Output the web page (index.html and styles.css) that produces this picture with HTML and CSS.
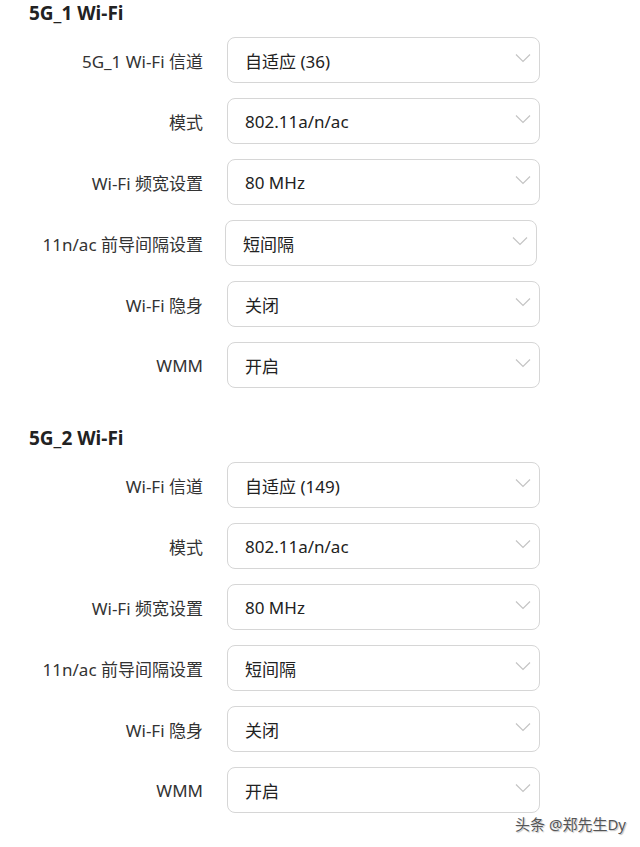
FILE: index.html
```
<!DOCTYPE html>
<html lang="zh-CN">
<head>
    <meta charset="UTF-8">
    <meta name="viewport" content="width=device-width, initial-scale=1.0">
    <title>5G Wi-Fi 设置</title>
    <link rel="stylesheet" href="styles.css">
</head>
<body>
    <div class="page">
        <div class="section">
            <h2 class="section-title">5G_1 Wi-Fi</h2>
            <div class="form">
                <div class="row">
                    <label>5G_1 Wi-Fi 信道</label>
                    <div class="select"><span>自适应 (36)</span><svg class="arrow" viewBox="0 0 16 10"><path d="M1 1.5 L8 8.5 L15 1.5"/></svg></div>
                </div>
                <div class="row">
                    <label>模式</label>
                    <div class="select"><span>802.11a/n/ac</span><svg class="arrow" viewBox="0 0 16 10"><path d="M1 1.5 L8 8.5 L15 1.5"/></svg></div>
                </div>
                <div class="row">
                    <label>Wi-Fi 频宽设置</label>
                    <div class="select"><span>80 MHz</span><svg class="arrow" viewBox="0 0 16 10"><path d="M1 1.5 L8 8.5 L15 1.5"/></svg></div>
                </div>
                <div class="row">
                    <label>11n/ac 前导间隔设置</label>
                    <div class="select shifted"><span>短间隔</span><svg class="arrow" viewBox="0 0 16 10"><path d="M1 1.5 L8 8.5 L15 1.5"/></svg></div>
                </div>
                <div class="row">
                    <label>Wi-Fi 隐身</label>
                    <div class="select"><span>关闭</span><svg class="arrow" viewBox="0 0 16 10"><path d="M1 1.5 L8 8.5 L15 1.5"/></svg></div>
                </div>
                <div class="row">
                    <label>WMM</label>
                    <div class="select"><span>开启</span><svg class="arrow" viewBox="0 0 16 10"><path d="M1 1.5 L8 8.5 L15 1.5"/></svg></div>
                </div>
            </div>
        </div>

        <div class="section">
            <h2 class="section-title">5G_2 Wi-Fi</h2>
            <div class="form">
                <div class="row">
                    <label>Wi-Fi 信道</label>
                    <div class="select"><span>自适应 (149)</span><svg class="arrow" viewBox="0 0 16 10"><path d="M1 1.5 L8 8.5 L15 1.5"/></svg></div>
                </div>
                <div class="row">
                    <label>模式</label>
                    <div class="select"><span>802.11a/n/ac</span><svg class="arrow" viewBox="0 0 16 10"><path d="M1 1.5 L8 8.5 L15 1.5"/></svg></div>
                </div>
                <div class="row">
                    <label>Wi-Fi 频宽设置</label>
                    <div class="select"><span>80 MHz</span><svg class="arrow" viewBox="0 0 16 10"><path d="M1 1.5 L8 8.5 L15 1.5"/></svg></div>
                </div>
                <div class="row">
                    <label>11n/ac 前导间隔设置</label>
                    <div class="select"><span>短间隔</span><svg class="arrow" viewBox="0 0 16 10"><path d="M1 1.5 L8 8.5 L15 1.5"/></svg></div>
                </div>
                <div class="row">
                    <label>Wi-Fi 隐身</label>
                    <div class="select"><span>关闭</span><svg class="arrow" viewBox="0 0 16 10"><path d="M1 1.5 L8 8.5 L15 1.5"/></svg></div>
                </div>
                <div class="row">
                    <label>WMM</label>
                    <div class="select"><span>开启</span><svg class="arrow" viewBox="0 0 16 10"><path d="M1 1.5 L8 8.5 L15 1.5"/></svg></div>
                </div>
            </div>
        </div>

        <div class="watermark">头条 @郑先生Dy</div>
    </div>
</body>
</html>
```

FILE: styles.css
```
* {
    box-sizing: border-box;
    font-family: "Noto Sans", "Noto Sans CJK SC", sans-serif;
}
body {
    margin: 0;
    padding: 0;
    background-color: #fff;
    color: #333;
}
.page {
    width: 640px;
    height: 847px;
    overflow: hidden;
}
.section + .section {
    margin-top: 37px;
}
.section-title {
    margin: 0 0 11px 0;
    padding-left: 29px;
    font-size: 19px;
    line-height: 26px;
    font-weight: 700;
    color: #222;
}
.form {
    display: flex;
    flex-direction: column;
    gap: 15px;
}
.row {
    display: flex;
    align-items: center;
    gap: 24px;
}
.row label {
    width: 203px;
    text-align: right;
    font-size: 17px;
    color: #333;
    white-space: nowrap;
}
.select {
    width: 313px;
    height: 46px;
    border: 1px solid #d6d6d6;
    border-radius: 8px;
    display: flex;
    align-items: center;
    justify-content: space-between;
    padding: 0 8px 0 17px;
    font-size: 17px;
    color: #222;
}
.select.shifted {
    margin-left: -2px;
    width: 312px;
}
.arrow {
    width: 16px;
    height: 10px;
    margin-top: -4px;
    fill: none;
    stroke: #c4c4c4;
    stroke-width: 1.2;
}
.watermark {
    margin-top: 0;
    padding-right: 14px;
    text-align: right;
    font-size: 15px;
    color: #555;
    text-shadow: 0 0 1px #fff, 1px 1px 1px #bbb;
}
```
